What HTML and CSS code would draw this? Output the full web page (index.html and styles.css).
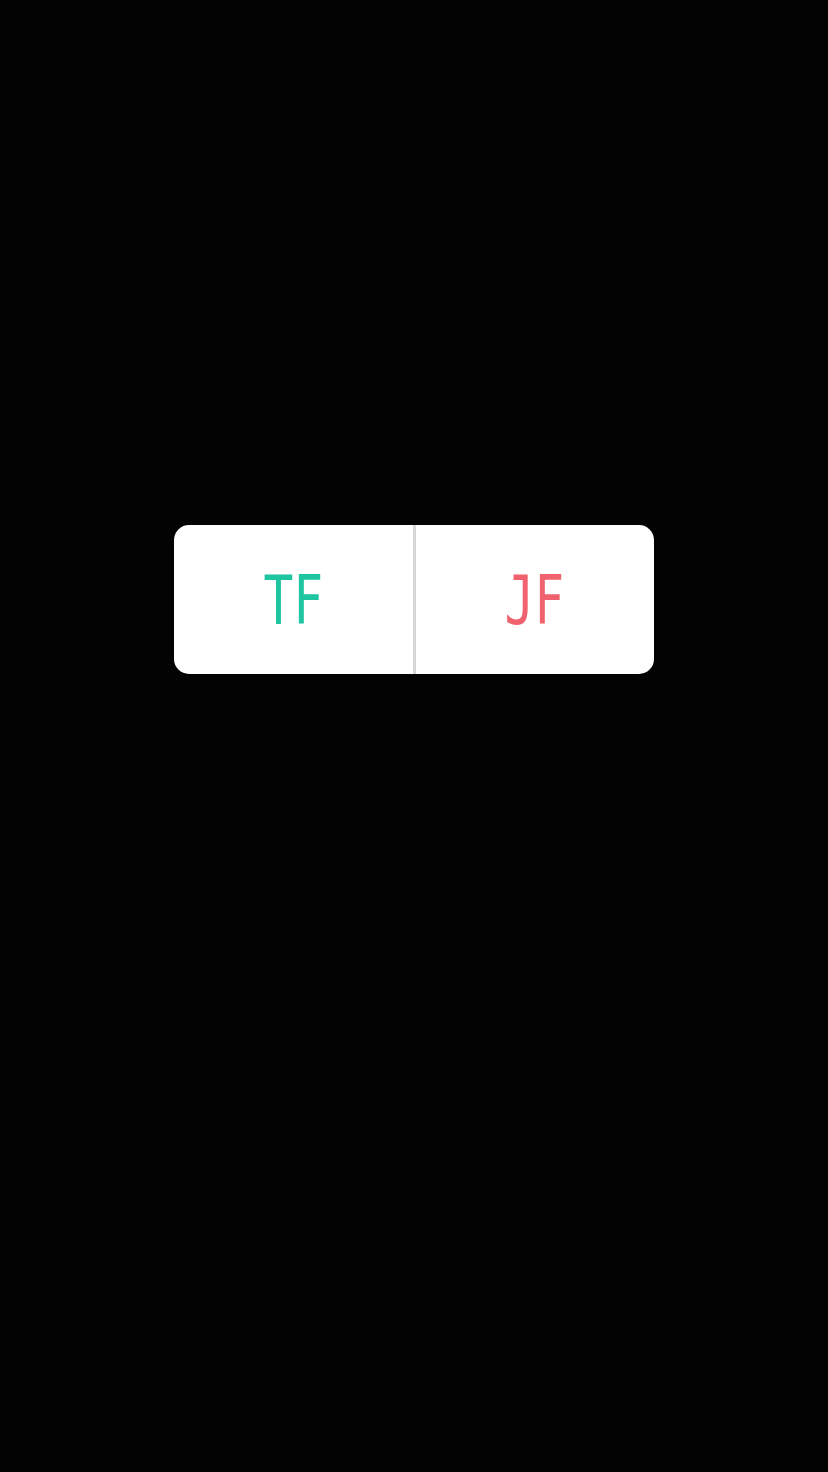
FILE: index.html
```html
<!DOCTYPE html>
<html lang="en">
<head>
<meta charset="utf-8">
<title>TF / JF</title>
<link rel="stylesheet" href="styles.css">
</head>
<body>
<main class="stage">
  <div class="poll">
    <div class="option"><span class="label label-green">TF</span></div>
    <div class="divider"></div>
    <div class="option"><span class="label label-red">JF</span></div>
  </div>
</main>
</body>
</html>
```
FILE: styles.css
```css
html, body {
  margin: 0;
  padding: 0;
  background: #030304;
}
.stage {
  width: 828px;
  height: 1472px;
  display: flex;
  justify-content: center;
  align-items: flex-start;
  padding-top: 525px;
  box-sizing: border-box;
  background: #030304;
}
.poll {
  width: 480px;
  height: 149px;
  background: #ffffff;
  border-radius: 15px;
  display: flex;
  overflow: hidden;
}
.option {
  flex: 1;
  display: flex;
  align-items: center;
  justify-content: center;
  padding-top: 4px;
}
.divider {
  width: 3px;
  background: #d6d6d6;
}
.label {
  display: inline-block;
  font-family: "DejaVu Sans Mono", "Liberation Mono", monospace;
  font-weight: 400;
  font-size: 67px;
  line-height: 1;
  transform: scaleX(0.74);
  letter-spacing: 0;
}
.label-green {
  color: #1fc5a0;
}
.label-red {
  color: #f0626e;
}
```
